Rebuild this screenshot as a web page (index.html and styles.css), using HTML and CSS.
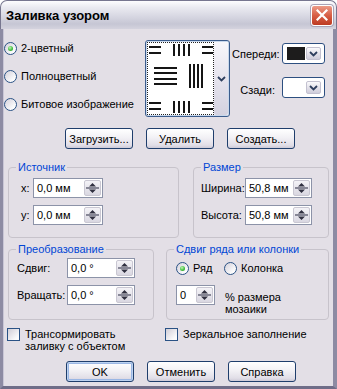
FILE: index.html
```html
<!DOCTYPE html>
<html>
<head>
  <meta charset="utf-8">
  <title>Заливка узором</title>
  <link rel="stylesheet" href="styles.css">
</head>
<body>
  <div class="window">
    <div class="titlebar">
      <span class="title">Заливка узором</span>
      <span class="close">
        <svg width="12" height="12" viewBox="0 0 12 12"><path d="M1.5 1.5 L10.5 10.5 M10.5 1.5 L1.5 10.5" stroke="#fff" stroke-width="2.2" stroke-linecap="square"/></svg>
      </span>
    </div>

    <div class="client">
      <div class="top">
        <div class="kinds">
          <label class="radio"><span class="dot on"></span>2-цветный</label>
          <label class="radio"><span class="dot"></span>Полноцветный</label>
          <label class="radio"><span class="dot"></span>Битовое изображение</label>
        </div>

        <div class="preview">
          <div class="tile">
            <svg width="64" height="69" viewBox="0 0 64 69" fill="#151515">
              <!-- top row -->
              <rect x="0" y="2" width="12" height="2"/><rect x="0" y="8" width="12" height="2"/>
              <rect x="24" y="0" width="2" height="12"/><rect x="29" y="0" width="2" height="12"/>
              <rect x="34" y="0" width="2" height="12"/><rect x="39" y="0" width="2" height="12"/>
              <rect x="53" y="2" width="11" height="2"/><rect x="53" y="8" width="11" height="2"/>
              <!-- middle row -->
              <rect x="5" y="23" width="23" height="2"/><rect x="5" y="28" width="23" height="2"/>
              <rect x="5" y="34" width="23" height="2"/><rect x="5" y="39" width="23" height="2"/>
              <rect x="40" y="20" width="2" height="24"/><rect x="44" y="20" width="2" height="24"/>
              <rect x="48" y="20" width="2" height="24"/><rect x="52" y="20" width="2" height="24"/>
              <!-- bottom row -->
              <rect x="0" y="58" width="12" height="2"/><rect x="0" y="64" width="12" height="2"/>
              <rect x="24" y="57" width="2" height="12"/><rect x="29" y="57" width="2" height="12"/>
              <rect x="34" y="57" width="2" height="12"/><rect x="39" y="57" width="2" height="12"/>
              <rect x="53" y="58" width="11" height="2"/><rect x="53" y="64" width="11" height="2"/>
            </svg>
          </div>
          <div class="drop">
            <svg width="9" height="6" viewBox="0 0 9 6"><path d="M1 1 L4.5 4.5 L8 1" stroke="#2e3f5e" stroke-width="1.8" fill="none"/></svg>
          </div>
        </div>

        <div class="colors">
          <span class="clabel">Спереди:</span>
          <div class="cbtn">
            <span class="swatch dark"></span>
            <span class="cdrop"><svg width="9" height="6" viewBox="0 0 9 6"><path d="M1 1 L4.5 4.5 L8 1" stroke="#2e3f5e" stroke-width="1.8" fill="none"/></svg></span>
          </div>
          <span class="clabel back">Сзади:</span>
          <div class="cbtn">
            <span class="swatch"></span>
            <span class="cdrop"><svg width="9" height="6" viewBox="0 0 9 6"><path d="M1 1 L4.5 4.5 L8 1" stroke="#2e3f5e" stroke-width="1.8" fill="none"/></svg></span>
          </div>
        </div>
      </div>

      <div class="btnrow">
        <button class="btn">Загрузить...</button>
        <button class="btn">Удалить</button>
        <button class="btn">Создать...</button>
      </div>

      <div class="groups first">
        <fieldset class="group source">
          <legend>Источник</legend>
          <div class="field">
            <span class="flabel">x:</span>
            <div class="spin"><span class="val">0,0 мм</span><span class="arrows"></span></div>
          </div>
          <div class="field">
            <span class="flabel">y:</span>
            <div class="spin"><span class="val">0,0 мм</span><span class="arrows"></span></div>
          </div>
        </fieldset>
        <fieldset class="group size">
          <legend>Размер</legend>
          <div class="field">
            <span class="flabel">Ширина:</span>
            <div class="spin"><span class="val">50,8 мм</span><span class="arrows"></span></div>
          </div>
          <div class="field">
            <span class="flabel">Высота:</span>
            <div class="spin"><span class="val">50,8 мм</span><span class="arrows"></span></div>
          </div>
        </fieldset>
      </div>

      <div class="groups second">
        <fieldset class="group transform">
          <legend>Преобразование</legend>
          <div class="field">
            <span class="flabel">Сдвиг:</span>
            <div class="spin"><span class="val">0,0 °</span><span class="arrows"></span></div>
          </div>
          <div class="field">
            <span class="flabel">Вращать:</span>
            <div class="spin"><span class="val">0,0 °</span><span class="arrows"></span></div>
          </div>
        </fieldset>
        <fieldset class="group offset">
          <legend>Сдвиг ряда или колонки</legend>
          <div class="field">
            <label class="radio row-opt"><span class="dot on"></span>Ряд</label>
            <label class="radio"><span class="dot"></span>Колонка</label>
          </div>
          <div class="field tall">
            <div class="spin"><span class="val">0</span><span class="arrows"></span></div>
            <span class="note">% размера<br>мозаики</span>
          </div>
        </fieldset>
      </div>

      <div class="checks">
        <label class="check first"><span class="box"></span><span>Трансормировать<br>заливку с объектом</span></label>
        <label class="check"><span class="box"></span><span>Зеркальное заполнение</span></label>
      </div>

      <div class="btnrow bottom">
        <button class="btn default">OK</button>
        <button class="btn">Отменить</button>
        <button class="btn">Справка</button>
      </div>
    </div>
  </div>
</body>
</html>
```

FILE: styles.css
```css
/* pattern fill dialog, XP silver look */
* {
  box-sizing: border-box;
}
body {
  margin: 0;
  background: #fff;
  font-family: "Liberation Sans", Arial, sans-serif;
  font-size: 11px;
  color: #000;
}
.window {
  width: 337px;
  height: 389px;
  display: flex;
  flex-direction: column;
}

/* title bar */
.titlebar {
  height: 29px;
  display: flex;
  align-items: center;
  justify-content: space-between;
  padding: 0 3px 0 5px;
  border: 1px solid #77768f;
  border-bottom: none;
  border-radius: 7px 7px 0 0;
  background: linear-gradient(#fdfdfe 0%, #ebebf1 22%, #d7d7e2 55%, #c6c6d4 82%, #d4d3de 100%);
}
.title {
  font-weight: bold;
  font-size: 13px;
  padding-top: 1px;
}
.close {
  width: 22px;
  height: 21px;
  display: flex;
  align-items: center;
  justify-content: center;
  border: 1px solid #fff;
  border-radius: 3px;
  background: linear-gradient(#ec9c88, #d75e45 50%, #bd3a22);
  box-shadow: 0 0 0 1px #a9a3b6;
}

/* client area */
.client {
  flex: 1;
  background: #e3dfe6;
  border-left: 3px solid #8d8ba3;
  border-right: 4px solid #8d8ba3;
  border-bottom: 3px solid #6f6d88;
  box-shadow: inset 1px 0 #c9c6d6;
}
.top {
  display: flex;
  height: 99px;
}
.kinds {
  width: 142px;
  padding: 5px 0 0 1px;
}
.radio {
  display: flex;
  align-items: center;
  gap: 4px;
  height: 28px;
  white-space: nowrap;
}
.dot {
  width: 13px;
  height: 13px;
  flex: none;
  display: flex;
  align-items: center;
  justify-content: center;
  border: 1px solid #2a5285;
  border-radius: 50%;
  background: linear-gradient(135deg, #d3d0da, #fbfbfc 75%);
}
.dot.on::after {
  content: "";
  width: 5px;
  height: 5px;
  border-radius: 50%;
  background: radial-gradient(circle at 40% 35%, #c4f5b4, #44c043 55%, #1f8a1f);
}

/* pattern preview */
.preview {
  display: flex;
  margin-top: 11px;
  width: 85px;
  height: 77px;
  padding: 1px;
  border: 1px solid #3b5c8c;
  border-radius: 3px;
  background: #fff;
  box-shadow: inset 0 0 0 1px #c8d8ec;
}
.tile {
  width: 67px;
  padding: 1px 0 0 1px;
  border: 1px dotted #222;
  overflow: hidden;
  background: #fff;
}
.tile svg {
  display: block;
}
.drop {
  flex: 1;
  display: flex;
  align-items: center;
  justify-content: center;
  border-radius: 2px;
  background: linear-gradient(#f8f7fb, #ebe9f1 35%, #d4d2e0);
}

/* colour pickers */
.colors {
  margin-left: 2px;
  padding-top: 14px;
  display: grid;
  grid-template-columns: 50px 43px;
  grid-auto-rows: 21px;
  row-gap: 13px;
  align-items: center;
}
.clabel {
  text-align: right;
  padding-right: 3px;
  white-space: nowrap;
}
.clabel.back {
  padding-right: 7px;
  padding-top: 4px;
}
.cbtn {
  display: flex;
  gap: 1px;
  height: 21px;
  padding: 3px 3px 3px 4px;
  border: 1px solid #2d4f80;
  border-radius: 3px;
  background: #fff;
}
.swatch {
  flex: 1;
}
.swatch.dark {
  background: #1d1c1c;
}
.cdrop {
  width: 15px;
  display: flex;
  align-items: center;
  justify-content: center;
  border: 1px solid #c3c1d0;
  border-radius: 2px;
  background: linear-gradient(#fafafc, #e4e2ea 50%, #cfcddb);
}

/* push buttons */
.btnrow {
  display: flex;
  gap: 13px;
  padding-left: 62px;
  height: 21px;
}
.btnrow.bottom {
  margin-top: 5px;
  padding-left: 63px;
}
.btn {
  width: 68px;
  height: 21px;
  padding: 0;
  font: inherit;
  color: #000;
  border: 1px solid #1f3e6c;
  border-radius: 3px;
  background: linear-gradient(#ffffff, #f2f1f5 45%, #e1dee7 85%, #cdcad7);
}
.btn.default {
  box-shadow: inset 0 0 0 1px #bcd2f0, inset 0 0 0 2px #9ab6e4;
}

/* group boxes */
.groups {
  display: flex;
  padding-left: 5px;
}
.groups.first {
  margin-top: 12px;
  gap: 14px;
}
.groups.second {
  margin-top: 5px;
  gap: 12px;
}
.group {
  margin: 0;
  min-width: 0;
  height: 77px;
  padding: 4px 7px 0 7px;
  border: 1px solid #c7c3cb;
  border-radius: 4px;
}
.groups.second .group {
  padding-top: 2px;
}
.group legend {
  padding: 0 2px;
  line-height: 13px;
  color: #0046d5;
}
.source { width: 171px; }
.size { width: 136px; }
.transform { width: 146px; }
.offset { width: 163px; }

.field {
  display: flex;
  align-items: center;
  height: 20px;
}
.field + .field {
  margin-top: 7px;
}
.flabel {
  flex: none;
  white-space: nowrap;
}
.source .flabel { width: 17px; padding-left: 5px; }
.size .flabel { width: 44px; }
.transform .flabel { width: 51px; padding-left: 1px; }

.spin {
  display: flex;
  height: 20px;
  padding: 1px;
  border: 1px solid #8c93a8;
  background: #fff;
}
.source .spin { width: 70px; }
.size .spin { width: 67px; }
.transform .spin { width: 68px; }
.offset .spin { width: 39px; }
.spin .val {
  flex: 1;
  padding-left: 2px;
  line-height: 16px;
  white-space: nowrap;
}
.spin .arrows {
  width: 17px;
  border: 1px solid #c9c7d2;
  border-radius: 2px;
  background:
    url("data:image/svg+xml;utf8,<svg xmlns='http://www.w3.org/2000/svg' width='15' height='14'><path d='M1 7h13' stroke='%23878796' stroke-width='2'/><path d='M4 5.5 L7.5 2 L11 5.5Z M4 8.5 L7.5 12 L11 8.5Z' fill='%23303040'/></svg>") center / 15px 14px no-repeat,
    linear-gradient(#f4f3f7, #d9d7e1);
}

.offset .field {
  padding-left: 2px;
}
.row-opt {
  width: 48px;
}
.field.tall {
  align-items: flex-start;
}
.note {
  margin: 6px 0 0 10px;
  line-height: 12px;
}

/* check boxes */
.checks {
  display: flex;
  height: 28px;
  margin-top: 8px;
  padding-left: 4px;
}
.check {
  display: flex;
  align-items: flex-start;
  gap: 5px;
  line-height: 12px;
}
.check.first {
  width: 158px;
}
.box {
  width: 13px;
  height: 13px;
  flex: none;
  border: 1px solid #2a5285;
  background: linear-gradient(135deg, #d1ced7, #fbfbfc 80%);
}
```
